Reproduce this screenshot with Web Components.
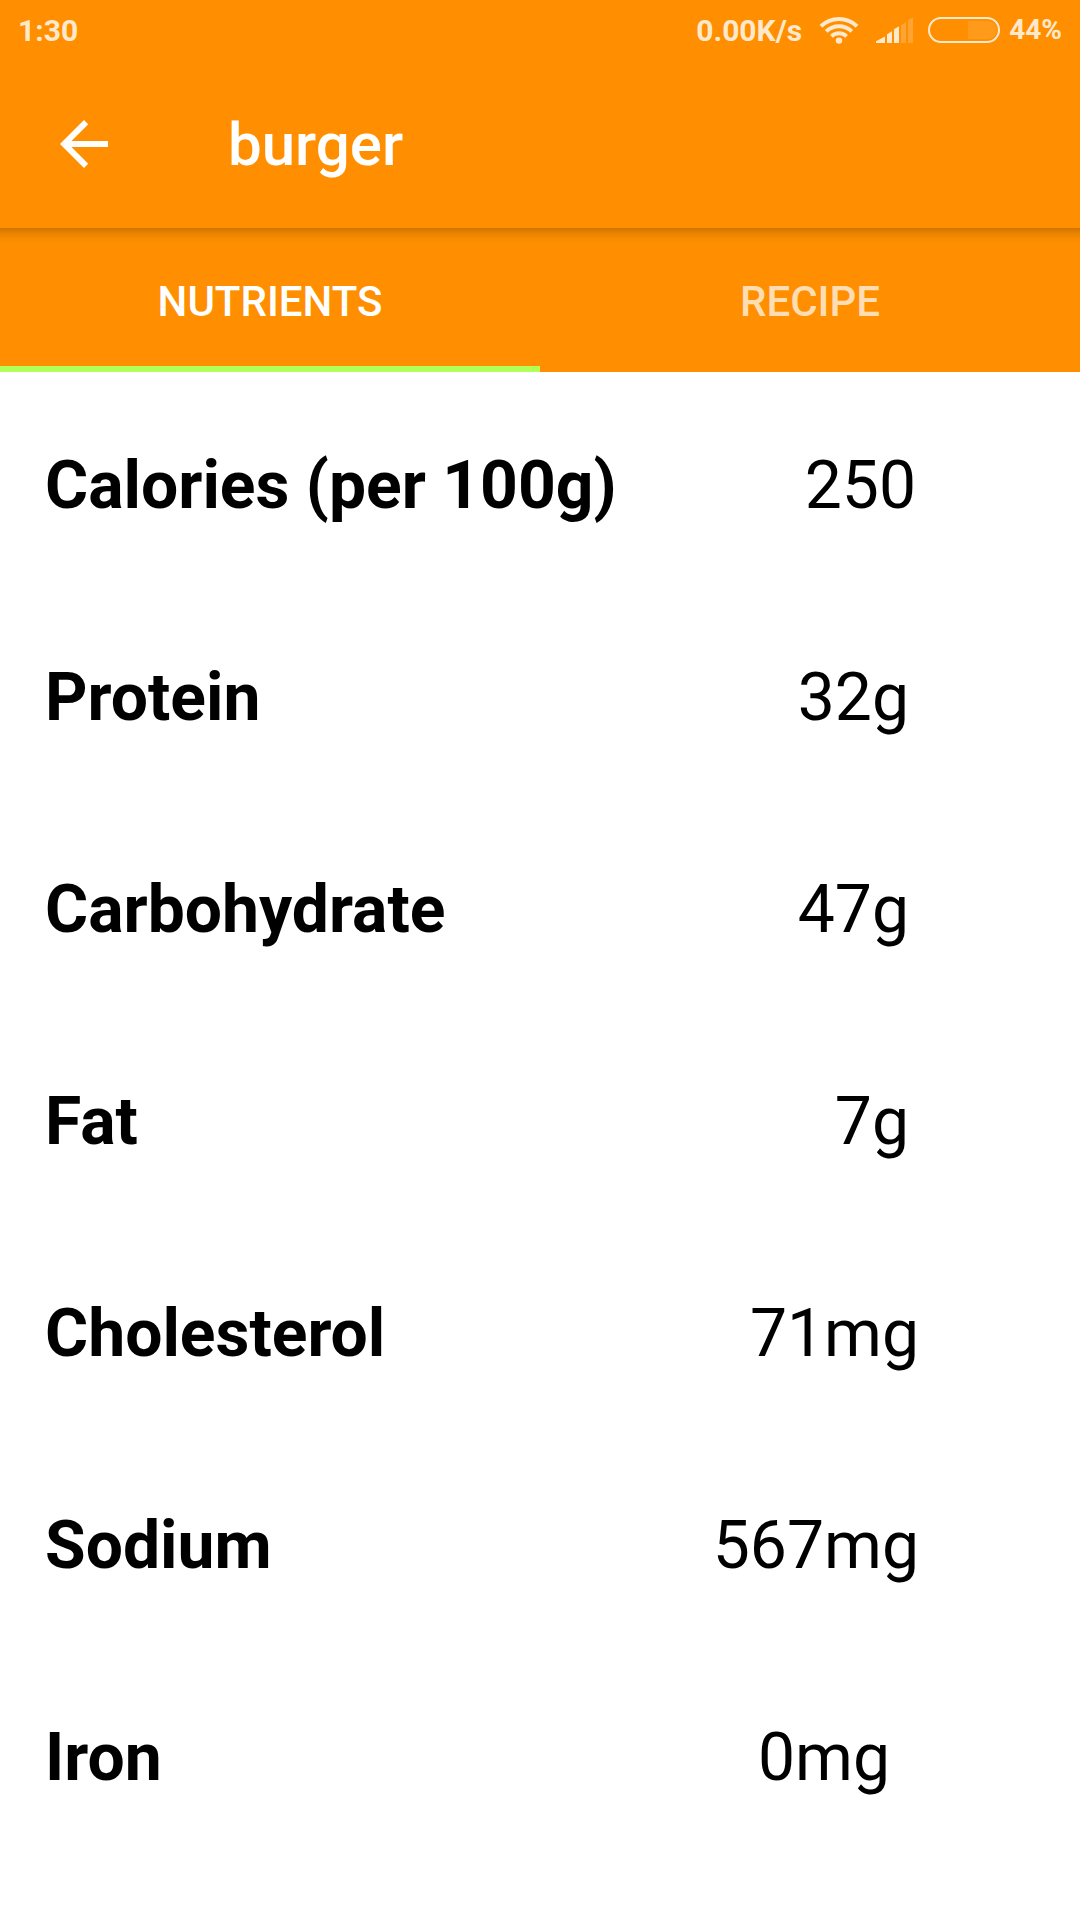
<!DOCTYPE html>
<html lang="en">
<head>
<meta charset="utf-8">
<meta name="viewport" content="width=device-width, initial-scale=1">
<title>burger</title>
<style>
  html, body { margin: 0; background: #fff; }
  body { font-family: Roboto, "Noto Sans", sans-serif; color: #000; --primary: #ff8f00; --accent: #b2ff59; }
</style>
</head>
<body>
<food-app></food-app>

<template id="status-bar">
  <style>
    :host { display: flex; align-items: center; height: 60px; padding: 0 18px; background: var(--primary); color: #ffe9cc; font-size: 30px; font-weight: 700; line-height: 36px; }
    .time { flex: 1; padding-top: 1px; }
    .speed { padding-top: 1px; }
    .percent { font-size: 28px; }
    svg { display: block; flex: none; }
    .wifi { margin-left: 17px; }
    .signal { margin-left: 17px; }
    .battery { margin: 0 9px 0 14px; }
  </style>
  <span class="time">1:30</span>
  <span class="speed">0.00K/s</span>
  <svg class="wifi" width="40" height="28" viewBox="0 0 40 28" fill="none" stroke="#ffe9cc" stroke-width="4" aria-hidden="true">
    <path d="M2 10.2A26 26 0 0 1 38 10.2"/>
    <path d="M7.2 15.4A18.4 18.4 0 0 1 32.8 15.4"/>
    <path d="M12.4 20.4A11 11 0 0 1 27.6 20.4"/>
    <circle cx="20" cy="24.6" r="3.2" fill="#ffe9cc" stroke="none"/>
  </svg>
  <svg class="signal" width="38" height="26" viewBox="0 0 38 26" fill="#ffe9cc" aria-hidden="true">
    <path d="M0 26V24.2L9 19.5V26Z"/>
    <path d="M11 26V17.2L16 14.2V26Z"/>
    <path d="M18 26V12.2L23 9.2V26Z"/>
    <path d="M25 26V8.2L30 5.2V26ZM32 26V3.2L37 .3V26Z" fill="#ffa333"/>
  </svg>
  <svg class="battery" width="72" height="28" viewBox="0 0 72 28" aria-hidden="true">
    <path d="M40 5H60A9 9 0 0 1 60 23H40Z" fill="#ff9a1a"/>
    <rect x="1" y="2" width="70" height="24" rx="12" fill="none" stroke="#ffe9cc" stroke-width="2"/>
  </svg>
  <span class="percent">44%</span>
</template>

<template id="app-bar">
  <style>
    :host { display: flex; align-items: center; height: 168px; background: var(--primary); color: #fff; }
    button { display: flex; align-items: center; justify-content: center; width: 168px; height: 168px; padding: 0; border: 0; background: none; color: inherit; cursor: pointer; }
    h1 { margin: 0; padding: 1px 0 0 60px; font-size: 60px; font-weight: 500; line-height: 72px; }
  </style>
  <button type="button" aria-label="Back">
    <svg width="72" height="72" viewBox="0 0 24 24" fill="currentColor"><path d="M20 11H7.83l5.59-5.59L12 4l-8 8 8 8 1.41-1.41L7.83 13H20v-2z"/></svg>
  </button>
  <h1><slot></slot></h1>
</template>

<template id="tab-bar">
  <style>
    :host { display: flex; height: 144px; background: linear-gradient(rgba(0,0,0,.19), rgba(0,0,0,.09) 5px, rgba(0,0,0,.03) 10px, transparent 16px) var(--primary); }
  </style>
  <slot></slot>
</template>

<template id="tab-item">
  <style>
    :host { display: flex; flex: 1; }
    button { flex: 1; padding: 9px 0 0; border: 0; border-bottom: 6px solid transparent; background: none; color: #ffddb2; font: 500 42px/50px Roboto, "Noto Sans", sans-serif; cursor: pointer; }
    :host([selected]) button { color: #fff; border-color: var(--accent); }
  </style>
  <button type="button" role="tab"><slot></slot></button>
</template>

<template id="nutrient-table">
  <style>
    :host { display: block; padding: 8px 0; }
    table { width: 100%; border-collapse: collapse; font-size: 66px; line-height: 78px; }
    th, td { height: 212px; padding: 0; box-sizing: border-box; vertical-align: middle; white-space: nowrap; }
    th { padding-left: 45px; text-align: left; font-weight: 700; }
    td { padding-right: 171px; text-align: right; }
    .count { padding-right: 164px; }
    .milligrams { padding-right: 161px; }
    .trace { padding-right: 190px; }
  </style>
  <table><tbody></tbody></table>
</template>

<template id="food-app">
  <style>:host { display: block; }</style>
  <status-bar></status-bar>
  <app-bar>burger</app-bar>
  <tab-bar role="tablist"><tab-item selected>NUTRIENTS</tab-item><tab-item>RECIPE</tab-item></tab-bar>
  <nutrient-table></nutrient-table>
</template>

<script>
  class TemplateElement extends HTMLElement {
    constructor() {
      super();
      this.attachShadow({ mode: "open" }).append(
        document.getElementById(this.localName).content.cloneNode(true));
    }
  }
  class StatusBar extends TemplateElement {}
  class AppBar extends TemplateElement {}
  class TabBar extends TemplateElement {
    connectedCallback() {
      this.addEventListener("click", (event) => {
        const tab = event.target.closest("tab-item");
        if (!tab) return;
        for (const item of this.querySelectorAll("tab-item")) item.toggleAttribute("selected", item === tab);
      });
    }
  }
  class TabItem extends TemplateElement {
    static observedAttributes = ["selected"];
    connectedCallback() { this.sync(); }
    attributeChangedCallback() { this.sync(); }
    sync() { this.shadowRoot.querySelector("button").setAttribute("aria-selected", this.hasAttribute("selected")); }
  }
  class NutrientTable extends TemplateElement {
    connectedCallback() {
      const rows = [
        ["Calories (per 100g)", "250", "count"],
        ["Protein", "32g", "grams"],
        ["Carbohydrate", "47g", "grams"],
        ["Fat", "7g", "grams"],
        ["Cholesterol", "71mg", "milligrams"],
        ["Sodium", "567mg", "milligrams"],
        ["Iron", "0mg", "trace"]
      ];
      const body = this.shadowRoot.querySelector("tbody");
      body.replaceChildren(...rows.map(([name, amount, kind]) => {
        const row = document.createElement("tr");
        const head = document.createElement("th");
        head.scope = "row";
        head.textContent = name;
        const cell = document.createElement("td");
        cell.className = kind;
        cell.textContent = amount;
        row.append(head, cell);
        return row;
      }));
    }
  }
  class FoodApp extends TemplateElement {}
  customElements.define("status-bar", StatusBar);
  customElements.define("app-bar", AppBar);
  customElements.define("tab-bar", TabBar);
  customElements.define("tab-item", TabItem);
  customElements.define("nutrient-table", NutrientTable);
  customElements.define("food-app", FoodApp);
</script>
</body>
</html>
